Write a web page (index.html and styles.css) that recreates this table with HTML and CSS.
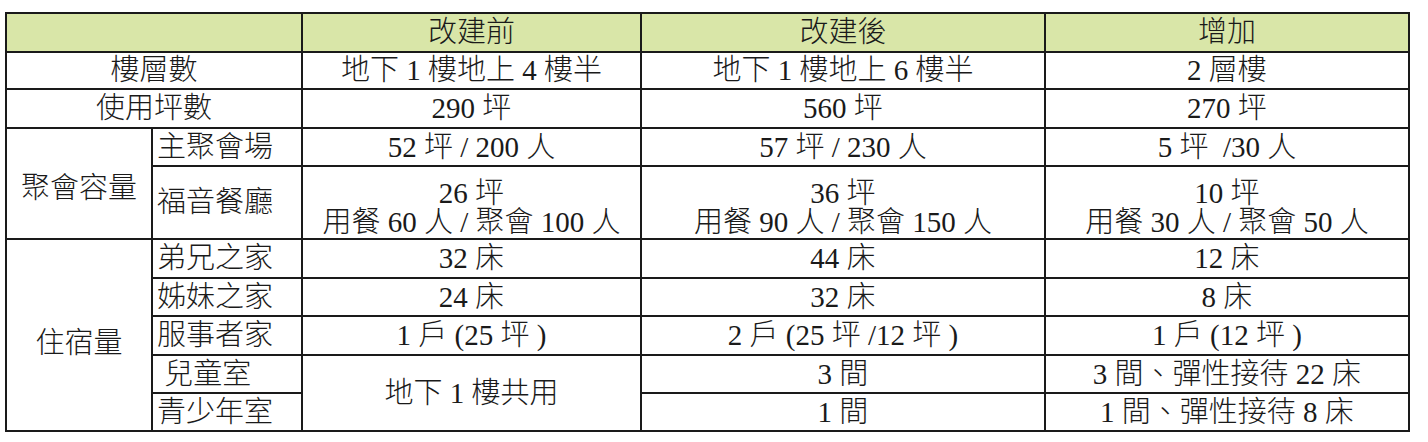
FILE: index.html
```html
<!DOCTYPE html>
<html lang="zh-Hant">
<head>
<meta charset="utf-8">
<title>改建比較</title>
<link rel="stylesheet" href="styles.css">
</head>
<body>
<table class="grid">
  <colgroup>
    <col class="c1"><col class="c2"><col class="c3"><col class="c4"><col class="c5">
  </colgroup>
  <tr class="head r39">
    <th colspan="2"></th>
    <th>改建前</th>
    <th>改建後</th>
    <th>增加</th>
  </tr>
  <tr class="r37">
    <td colspan="2">樓層數</td>
    <td>地下 1 樓地上 4 樓半</td>
    <td>地下 1 樓地上 6 樓半</td>
    <td>2 層樓</td>
  </tr>
  <tr class="r39">
    <td colspan="2">使用坪數</td>
    <td>290 坪</td>
    <td>560 坪</td>
    <td>270 坪</td>
  </tr>
  <tr class="r38">
    <td rowspan="2" class="group group-meet">聚會容量</td>
    <td class="sub">主聚會場</td>
    <td>52 坪 / 200 人</td>
    <td>57 坪 / 230 人</td>
    <td>5 坪&nbsp; /30 人</td>
  </tr>
  <tr class="r73">
    <td class="sub">福音餐廳</td>
    <td class="two">26 坪<br>用餐 60 人 / 聚會 100 人</td>
    <td class="two">36 坪<br>用餐 90 人 / 聚會 150 人</td>
    <td class="two">10 坪<br>用餐 30 人 / 聚會 50 人</td>
  </tr>
  <tr class="r39">
    <td rowspan="5" class="group group-stay">住宿量</td>
    <td class="sub">弟兄之家</td>
    <td>32 床</td>
    <td>44 床</td>
    <td>12 床</td>
  </tr>
  <tr class="r38">
    <td class="sub">姊妹之家</td>
    <td>24 床</td>
    <td>32 床</td>
    <td>8 床</td>
  </tr>
  <tr class="r39">
    <td class="sub">服事者家</td>
    <td>1 戶 (25 坪 )</td>
    <td>2 戶 (25 坪 /12 坪 )</td>
    <td>1 戶 (12 坪 )</td>
  </tr>
  <tr class="r38">
    <td class="sub">&nbsp;兒童室</td>
    <td rowspan="2">地下 1 樓共用</td>
    <td>3 間</td>
    <td>3 間、彈性接待 22 床</td>
  </tr>
  <tr class="r38">
    <td class="sub">青少年室</td>
    <td>1 間</td>
    <td>1 間、彈性接待 8 床</td>
  </tr>
</table>
</body>
</html>
```

FILE: styles.css
```css
html, body {
  margin: 0;
  padding: 0;
  background: #ffffff;
}

body {
  font-family: "Liberation Serif", "Noto Sans CJK TC", serif;
  font-size: 29px;
  color: #1a1a1a;
}

.grid {
  border-collapse: collapse;
  table-layout: fixed;
  width: 1405px;
  margin: 12px 0 0 5px;
}

.c1 { width: 146px; }
.c2 { width: 150px; }
.c3 { width: 339px; }
.c4 { width: 404px; }
.c5 { width: 364px; }

.grid th,
.grid td {
  border: 2px solid #1a1a1a;
  padding: 0 4px;
  text-align: center;
  vertical-align: middle;
  line-height: 29px;
  font-weight: 300;
  white-space: nowrap;
  overflow: hidden;
}

.head th {
  background: #d9e6a8;
}

.grid td.sub {
  text-align: left;
  padding-left: 4px;
}

.grid td.two {
  padding-top: 10px;
}

.grid td.group-meet {
  padding-top: 10px;
}

.grid td.group-stay {
  padding-top: 16px;
}

.r37 { height: 37px; }
.r38 { height: 38px; }
.r39 { height: 39px; }
.r73 { height: 73px; }
```
